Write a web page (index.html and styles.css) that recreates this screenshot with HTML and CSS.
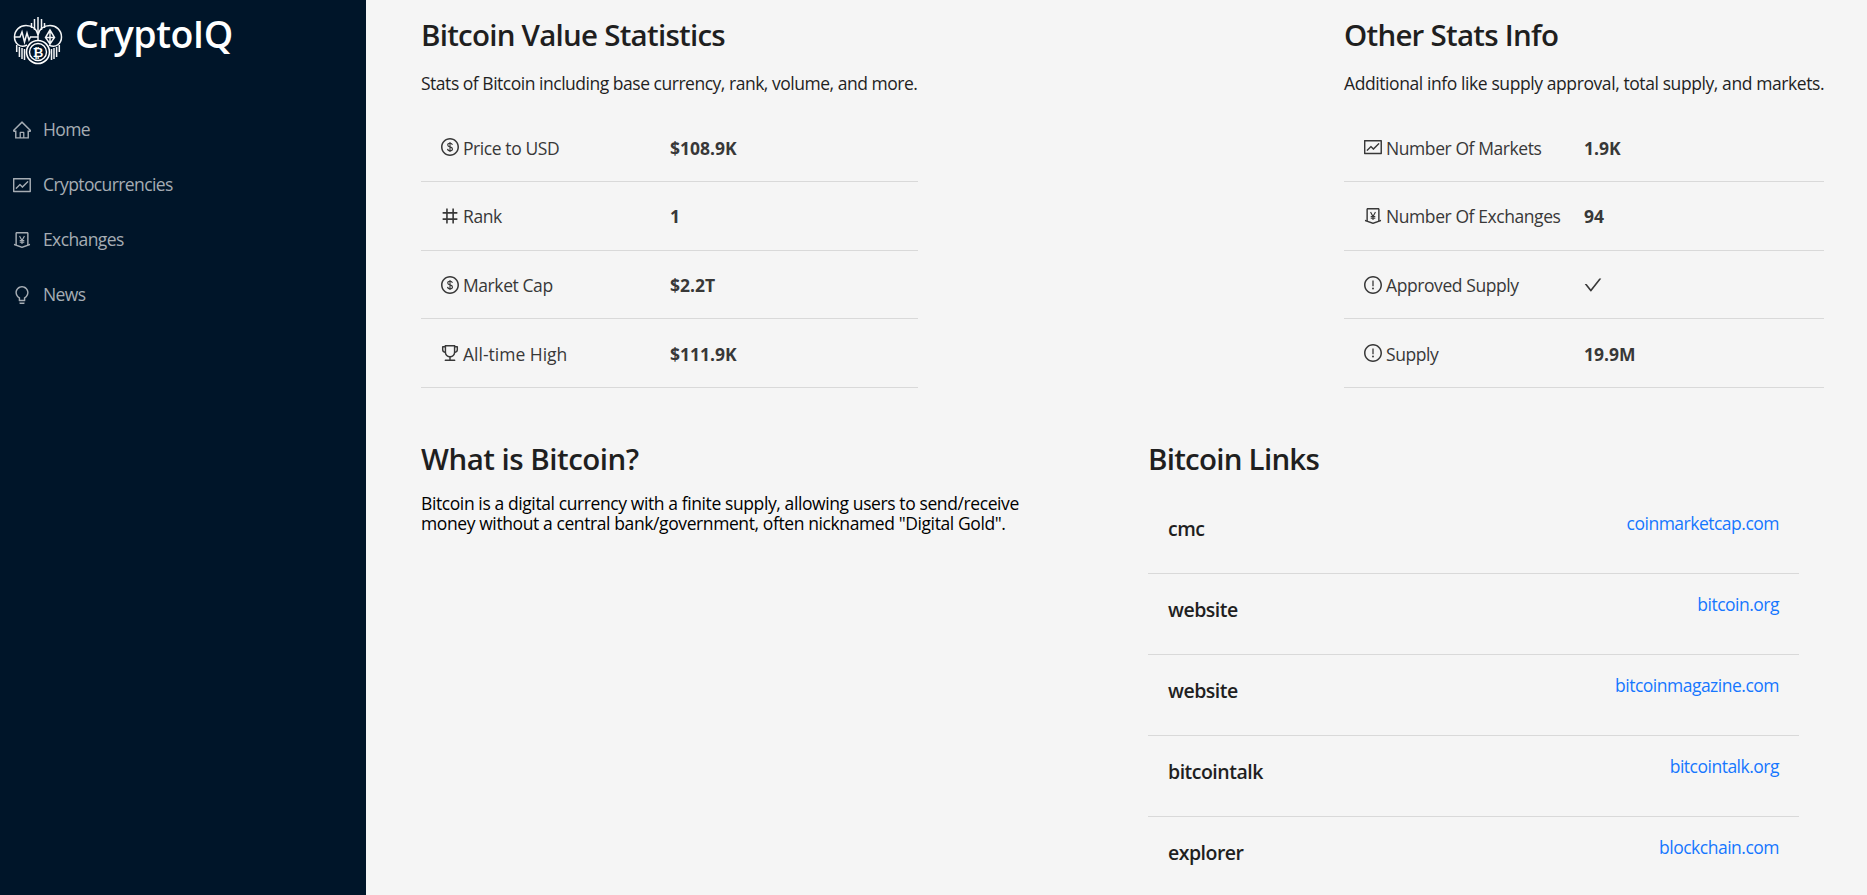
FILE: index.html
```html
<!DOCTYPE html>
<html lang="en">
<head>
<meta charset="utf-8">
<title>CryptoIQ</title>
<link rel="stylesheet" href="styles.css">
</head>
<body>
<svg class="sprite" aria-hidden="true">
  <symbol id="home" viewBox="64 64 896 896"><path d="M946.5 505L560.1 118.8l-25.9-25.9a31.5 31.5 0 00-44.4 0L77.5 505a63.9 63.9 0 00-18.8 46c.4 35.2 29.7 63.3 64.9 63.3h42.5V940h691.8V614.3h43.4c17.1 0 33.2-6.7 45.3-18.8a63.6 63.6 0 0018.7-45.3c0-17-6.7-33.1-18.8-45.2zM568 868H456V664h112v204zm217.9-325.7V868H632V640c0-22.1-17.9-40-40-40H432c-22.1 0-40 17.9-40 40v228H238.1V542.3h-96l370-369.7 23.1 23.1L882 542.3h-96.1z"/></symbol>
  <symbol id="fund" viewBox="64 64 896 896"><path d="M926 164H94c-17.7 0-32 14.3-32 32v640c0 17.7 14.3 32 32 32h832c17.7 0 32-14.3 32-32V196c0-17.7-14.3-32-32-32zm-40 632H134V236h752v560zm-658.9-82.3c3.1 3.1 8.2 3.1 11.3 0l172.5-172.5 114.4 114.5c3.1 3.1 8.2 3.1 11.3 0l297-297.2c3.1-3.1 3.1-8.2 0-11.3l-36.8-36.8a8.03 8.03 0 00-11.3 0L531 565 416.6 450.5a8.03 8.03 0 00-11.3 0l-214.9 215a8.03 8.03 0 000 11.3l36.7 36.9z"/></symbol>
  <symbol id="money" viewBox="64 64 896 896"><path d="M911.5 700.7a8 8 0 00-10.3-4.8L840 718.2V180c0-37.6-30.4-68-68-68H252c-37.6 0-68 30.4-68 68v538.2l-61.3-22.3c-.9-.3-1.8-.5-2.7-.5-4.4 0-8 3.6-8 8V763c0 3.3 2.1 6.3 5.3 7.5L501 910.1c7.1 2.6 14.8 2.6 21.9 0l383.8-139.5c3.2-1.2 5.3-4.2 5.3-7.5v-59.6c0-1-.2-1.9-.5-2.8zM512 837.5l-256-93.1V184h512v560.4l-256 93.1z"/><path class="line" d="M390 314L512 535 634 314M512 535V710M398 538H626M398 620H626"/></symbol>
  <symbol id="bulb" viewBox="64 64 896 896"><path d="M632 888H392c-4.4 0-8 3.6-8 8v32c0 17.7 14.3 32 32 32h192c17.7 0 32-14.3 32-32v-32c0-4.4-3.6-8-8-8zM512 64c-181.1 0-328 146.9-328 328 0 121.4 66 227.4 164 284.1V792c0 17.7 14.3 32 32 32h264c17.7 0 32-14.3 32-32V676.1c98-56.7 164-162.7 164-284.1 0-181.1-146.9-328-328-328zm127.9 549.8L604 634.6V752H420V634.6l-35.9-20.8C305.4 568.3 256 484.5 256 392c0-141.4 114.6-256 256-256s256 114.6 256 256c0 92.5-49.4 176.3-128.1 221.8z"/></symbol>
  <symbol id="dollar" viewBox="64 64 896 896"><path d="M512 64C264.6 64 64 264.6 64 512s200.6 448 448 448 448-200.6 448-448S759.4 64 512 64zm0 820c-205.4 0-372-166.6-372-372s166.6-372 372-372 372 166.6 372 372-166.6 372-372 372z"/><path class="line" d="M512 262V762M628 414C620 352 572 328 512 328C445 328 398 362 398 414C398 474 450 492 512 508C580 526 636 546 636 608C636 664 582 698 512 698C444 698 394 668 390 606"/></symbol>
  <symbol id="number" viewBox="64 64 896 896"><path d="M872 394c4.4 0 8-3.6 8-8v-60c0-4.4-3.6-8-8-8H708V152c0-4.4-3.6-8-8-8h-64c-4.4 0-8 3.6-8 8v166H400V152c0-4.4-3.6-8-8-8h-64c-4.4 0-8 3.6-8 8v166H152c-4.4 0-8 3.6-8 8v60c0 4.4 3.6 8 8 8h168v236H152c-4.4 0-8 3.6-8 8v60c0 4.4 3.6 8 8 8h168v166c0 4.4 3.6 8 8 8h64c4.4 0 8-3.6 8-8V706h228v166c0 4.4 3.6 8 8 8h64c4.4 0 8-3.6 8-8V706h164c4.4 0 8-3.6 8-8v-60c0-4.4-3.6-8-8-8H708V394h164zM628 630H400V394h228v236z"/></symbol>
  <symbol id="trophy" viewBox="64 64 896 896"><path d="M868 160h-92v-40c0-4.4-3.6-8-8-8H256c-4.4 0-8 3.6-8 8v40h-92a44 44 0 00-44 44v148c0 81.7 60 149.6 138.2 162C265.6 630.2 359 721.8 476 734.5v105.2H280c-17.7 0-32 14.3-32 32V904c0 4.4 3.6 8 8 8h512c4.4 0 8-3.6 8-8v-32.3c0-17.7-14.3-32-32-32H548V734.5C665 721.8 758.4 630.2 773.8 514 852 501.6 912 433.7 912 352V204a44 44 0 00-44-44zM184 352V232h64v207.6a91.99 91.99 0 01-64-87.6zm520 128c0 49.1-19.1 95.4-53.9 130.1-34.8 34.8-81 53.9-130.1 53.9h-16c-49.1 0-95.4-19.1-130.1-53.9-34.8-34.8-53.9-81-53.9-130.1V184h384v296zm136-128c0 41-26.9 75.8-64 87.6V232h64v120z"/></symbol>
  <symbol id="exclaim" viewBox="64 64 896 896"><path d="M512 64C264.6 64 64 264.6 64 512s200.6 448 448 448 448-200.6 448-448S759.4 64 512 64zm0 820c-205.4 0-372-166.6-372-372s166.6-372 372-372 372 166.6 372 372-166.6 372-372 372z"/><path d="M464 688a48 48 0 1096 0 48 48 0 10-96 0zm24-112h48c4.4 0 8-3.6 8-8V296c0-4.4-3.6-8-8-8h-48c-4.4 0-8 3.6-8 8v272c0 4.4 3.6 8 8 8z"/></symbol>
  <symbol id="check" viewBox="64 64 896 896"><path d="M912 190h-69.9c-9.8 0-19.1 4.5-25.1 12.2L404.7 724.5 207 474a32 32 0 00-25.1-12.2H112c-6.7 0-10.4 7.7-6.3 12.9l273.9 347c12.8 16.2 37.4 16.2 50.3 0l488.4-618.9c4.1-5.1.4-12.8-6.3-12.8z"/></symbol>
</svg>
<div class="app">
  <aside class="sidebar">
    <div class="brand">
      <svg class="logo" viewBox="13 16 50 50">
        <g class="logo-line">
          <path d="M38 17V40M34.5 19V30M41.5 19V30M31.5 23V28M44.5 23V28"/>
          <path d="M27 45C20 49 14.5 43 14.5 37C14.5 30 20 25.5 26 25.5C32 25.5 37 29 38 35C39 29 44 25.5 50 25.5C56 25.5 61.500 30 61.500 37C61.500 43 56 49 49 45"/>
          <path d="M15 37H20L22 32L24.500 42L27 33L29 40L30.500 37H38"/>
          <path d="M50 30L45.500 37.500L50 44L54.500 37.500ZM50 30V44M45.500 37.500H54.500"/>
          <path d="M16.700 45V52M19.400 47V57M22 48V59M24.500 49V60M59.300 45V52M56.600 47V57M54 48V59M51.500 49V60"/>
        </g>
        <circle class="coin" cx="38" cy="52" r="11.500"/>
        <circle class="coin-ring" cx="38" cy="52" r="8.500"/>
        <text class="coin-mark" x="38" y="56.500">₿</text>
      </svg>
      <h1 class="brand-name">CryptoIQ</h1>
    </div>
    <nav class="menu">
      <a class="menu-item"><svg class="icon"><use href="#home"/></svg><span>Home</span></a>
      <a class="menu-item"><svg class="icon"><use href="#fund"/></svg><span>Cryptocurrencies</span></a>
      <a class="menu-item"><svg class="icon"><use href="#money"/></svg><span>Exchanges</span></a>
      <a class="menu-item"><svg class="icon"><use href="#bulb"/></svg><span>News</span></a>
    </nav>
  </aside>
  <main class="content">
    <section class="stats">
      <div class="stats-col stats-value">
        <h2 class="heading">Bitcoin Value Statistics</h2>
        <p class="lead">Stats of Bitcoin including base currency, rank, volume, and more.</p>
        <div class="row"><svg class="icon"><use href="#dollar"/></svg><span class="label">Price to USD</span><b class="value">$108.9K</b></div>
        <div class="row"><svg class="icon"><use href="#number"/></svg><span class="label">Rank</span><b class="value">1</b></div>
        <div class="row"><svg class="icon"><use href="#dollar"/></svg><span class="label">Market Cap</span><b class="value">$2.2T</b></div>
        <div class="row"><svg class="icon"><use href="#trophy"/></svg><span class="label label-wide">All-time High</span><b class="value">$111.9K</b></div>
      </div>
      <div class="stats-col stats-other">
        <h2 class="heading">Other Stats Info</h2>
        <p class="lead">Additional info like supply approval, total supply, and markets.</p>
        <div class="row"><svg class="icon"><use href="#fund"/></svg><span class="label">Number Of Markets</span><b class="value">1.9K</b></div>
        <div class="row"><svg class="icon"><use href="#money"/></svg><span class="label">Number Of Exchanges</span><b class="value">94</b></div>
        <div class="row"><svg class="icon"><use href="#exclaim"/></svg><span class="label">Approved Supply</span><svg class="icon"><use href="#check"/></svg></div>
        <div class="row"><svg class="icon"><use href="#exclaim"/></svg><span class="label">Supply</span><b class="value">19.9M</b></div>
      </div>
    </section>
    <section class="about">
      <div class="about-text">
        <h2 class="heading">What is Bitcoin?</h2>
        <p class="description">Bitcoin is a digital currency with a finite supply, allowing users to send/receive<br>money without a central bank/government, often nicknamed "Digital Gold".</p>
      </div>
      <div class="links">
        <h2 class="heading">Bitcoin Links</h2>
        <div class="link-row"><h5 class="link-name">cmc</h5><a class="link">coinmarketcap.com</a></div>
        <div class="link-row"><h5 class="link-name">website</h5><a class="link">bitcoin.org</a></div>
        <div class="link-row"><h5 class="link-name">website</h5><a class="link">bitcoinmagazine.com</a></div>
        <div class="link-row"><h5 class="link-name">bitcointalk</h5><a class="link">bitcointalk.org</a></div>
        <div class="link-row"><h5 class="link-name">explorer</h5><a class="link">blockchain.com</a></div>
      </div>
    </section>
  </main>
</div>
</body>
</html>
```
FILE: styles.css
```css
* { box-sizing: border-box; }
body {
  margin: 0;
  height: 895px;
  overflow: hidden;
  background: #f5f5f5;
  color: #1f1f1f;
  font-family: "Open Sans", "Noto Sans", sans-serif;
  font-size: 17.5px;
}
h1, h2, h5, p { margin: 0; }
.sprite { display: none; }
.icon { width: 18px; height: 18px; flex: none; fill: currentColor; }
.line { fill: none; stroke: currentColor; stroke-width: 56; }
.app { display: flex; height: 895px; }

.sidebar { width: 366px; flex: none; background: #001529; }
.brand { display: flex; height: 102px; padding: 16px 0 0 13px; }
.logo { width: 50px; height: 50px; }
.logo-line { fill: none; stroke: #f2f4f5; stroke-width: 1.5; }
.coin { fill: #001529; stroke: #fff; stroke-width: 1.6; }
.coin-ring { fill: none; stroke: #fff; stroke-width: 1.4; }
.coin-mark { fill: #fff; font: bold 13px "DejaVu Sans", sans-serif; text-anchor: middle; }
.brand-name {
  margin: -6px 0 0 12px;
  color: #fff;
  font-size: 37.5px;
  font-weight: 650;
  line-height: 48px;
  letter-spacing: -0.55px;
}
.menu-item {
  display: flex;
  align-items: center;
  gap: 12px;
  height: 55px;
  padding-left: 13px;
  color: #a6adb4;
  letter-spacing: -0.6px;
}
.menu-item span { padding-bottom: 1px; }

.content { flex: 1; padding: 0 43px 0 55px; }
.stats { display: flex; justify-content: space-between; }
.stats-value { width: 497px; }
.stats-other { width: 480px; }
.heading {
  padding-top: 15px;
  font-size: 29.5px;
  font-weight: 600;
  line-height: 40px;
  letter-spacing: -0.75px;
  white-space: nowrap;
}
.about-text .heading { letter-spacing: -0.5px; }
.lead {
  padding: 15px 0 16.6px;
  line-height: 27px;
  letter-spacing: -0.48px;
  white-space: nowrap;
}
.stats-other .lead { letter-spacing: -0.41px; }
.row {
  display: flex;
  align-items: center;
  height: 68.6px;
  padding-left: 20px;
  border-bottom: 1px solid #d9d9d9;
  color: #383838;
  letter-spacing: -0.42px;
}
.label { width: 207px; margin-left: 4px; padding-top: 1px; }
.label-wide { letter-spacing: 0; }
.stats-other .label { width: 198px; }
.value { padding-top: 1px; font-weight: 700; letter-spacing: 0; }

.about { display: flex; justify-content: space-between; padding-top: 36px; }
.description {
  padding-top: 14px;
  color: #000;
  line-height: 20px;
  letter-spacing: -0.4px;
  white-space: nowrap;
}
.links { width: 651px; margin-right: 25px; }
.links .heading { margin-bottom: 14px; }
.link-row {
  display: flex;
  justify-content: space-between;
  height: 81px;
  padding: 18px 20px 0;
  border-bottom: 1px solid #d9d9d9;
}
.link-name { padding-top: 3px; font-size: 19.5px; font-weight: 600; line-height: 30px; letter-spacing: -0.5px; }
.link { color: #1677ff; line-height: 24px; letter-spacing: -0.5px; }
```
